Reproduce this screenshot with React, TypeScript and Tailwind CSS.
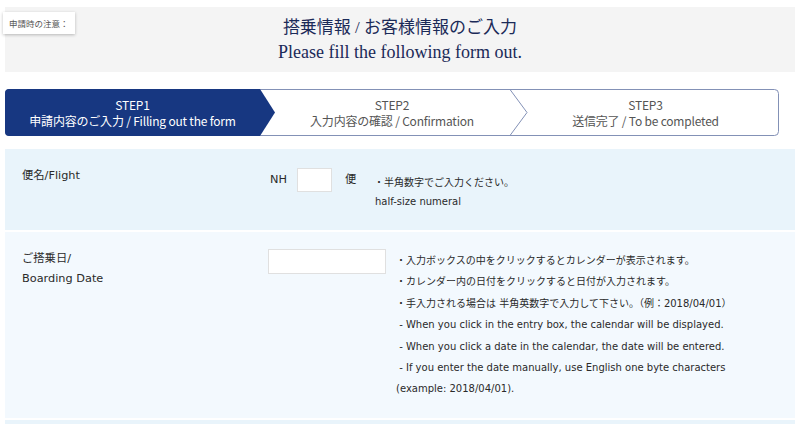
const navy = "#173781";

const Stepper = () => {
  return (
    <div className="relative ml-[5px] mt-[17px] h-[47px] w-[774px]">
      <svg
        className="absolute inset-0 h-full w-full"
        viewBox="0 0 774 47"
        fill="none"
        aria-hidden="true"
      >
        <path
          d="M0.5 4.5a4 4 0 0 1 4-4H769.5a4 4 0 0 1 4 4V42.5a4 4 0 0 1-4 4H4.5a4 4 0 0 1-4-4z"
          stroke="#8391b6"
          strokeWidth="1"
          fill="#ffffff"
        />
        <path
          d="M4 0H255L270 23.5L255 47H4a4 4 0 0 1-4-4V4a4 4 0 0 1 4-4z"
          fill={navy}
        />
        <path d="M505 0.5L522 23.5L505 46.5" stroke="#8391b6" strokeWidth="1" />
      </svg>
      <div
        className="relative flex h-full text-[12px] leading-[16px] tracking-[-0.2px]"
        style={{ fontFamily: '"Noto Sans CJK JP", "Noto Sans", sans-serif' }}
      >
        <div className="flex w-[255px] flex-col items-center justify-center text-white">
          <span>STEP1</span>
          <span>申請内容のご入力 / Filling out the form</span>
        </div>
        <div className="flex w-[260px] flex-col items-center justify-center pl-[4px] text-[#555]">
          <span>STEP2</span>
          <span>入力内容の確認 / Confirmation</span>
        </div>
        <div className="flex flex-1 flex-col items-center justify-center pr-[8px] text-[#555]">
          <span>STEP3</span>
          <span>送信完了 / To be completed</span>
        </div>
      </div>
    </div>
  );
};

const App = () => {
  const form = {
    fontFamily: '"DejaVu Sans", "Noto Sans CJK JP", sans-serif',
  };
  return (
    <div className="h-[424px] w-[800px] overflow-hidden bg-white pt-[7px]">
      <div className="relative mx-[5px] flex h-[65px] flex-col items-center justify-center bg-[#f4f4f4]">
        <div
          className="absolute left-[-2px] top-[5px] bg-white px-[6px] py-[5px] text-[8.5px] leading-[12px] text-[#555] shadow-[0_1px_3px_rgba(0,0,0,0.25)]"
          style={{ fontFamily: '"Noto Sans CJK JP", sans-serif' }}
        >
          申請時の注意：
        </div>
        <div
          className="pt-[1px] text-center text-[17px] leading-[24px] text-[#1b2a58]"
          style={{ fontFamily: '"Liberation Serif", "Noto Sans CJK JP", serif' }}
        >
          <p>搭乗情報 / お客様情報のご入力</p>
          <p className="text-[18px]">Please fill the following form out.</p>
        </div>
      </div>

      <Stepper />

      <div className="mx-[5px] mt-[13px] flex flex-col gap-[2px] text-[#2a2a2a]" style={form}>
        <div className="flex h-[81px] bg-[#e9f4fb] pt-[19px]">
          <div className="w-[263px] pl-[17px] text-[11.3px] leading-[16px]">便名/Flight</div>
          <div className="flex items-start text-[11.3px]">
            <span className="mt-[4px] w-[29px] pl-[2px]">NH</span>
            <span className="h-[24px] w-[35px] border border-[#e0e0e0] bg-white" />
            <span className="mt-[4px] w-[28px] pl-[13px]">便</span>
            <div className="ml-[14px] mt-[5px] text-[10px] leading-[19px]">
              <p>・半角数字でご入力ください。</p>
              <p className="pl-[1px]">half-size numeral</p>
            </div>
          </div>
        </div>

        <div className="flex h-[186px] bg-[#f3f9fe] pt-[15px]">
          <div className="w-[263px] pl-[17px] pt-[2px] text-[11.3px] leading-[20px]">
            <p>ご搭乗日/</p>
            <p>Boarding Date</p>
          </div>
          <div className="flex items-start">
            <span className="mt-[2px] h-[25px] w-[118px] border border-[#e0e0e0] bg-white" />
            <div className="ml-[10px] mt-[3px] text-[10px] leading-[21.4px]">
              <p>・入力ボックスの中をクリックするとカレンダーが表示されます。</p>
              <p>・カレンダー内の日付をクリックすると日付が入力されます。</p>
              <p>・手入力される場合は 半角英数字で入力して下さい。（例：2018/04/01）</p>
              <p>&nbsp;- When you click in the entry box, the calendar will be displayed.</p>
              <p>&nbsp;- When you click a date in the calendar, the date will be entered.</p>
              <p>&nbsp;- If you enter the date manually, use English one byte characters</p>
              <p>(example: 2018/04/01).</p>
            </div>
          </div>
        </div>

        <div className="h-[40px] bg-[#e9f4fb]" />
      </div>
    </div>
  );
};

export default App;
